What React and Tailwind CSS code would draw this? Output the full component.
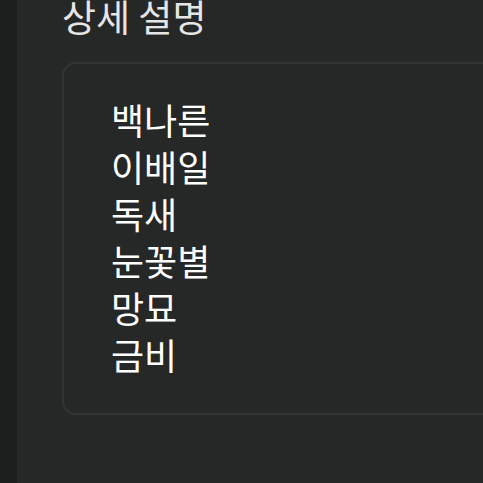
export default function App() {
  const names = ["백나른", "이배일", "독새", "눈꽃별", "망묘", "금비"];

  return (
    <div
      className="flex h-[483px] w-[483px] overflow-hidden bg-[#262727]"
      style={{ fontFamily: '"Noto Sans CJK KR", "Noto Sans", sans-serif' }}
    >
      <div className="w-[17px] shrink-0 bg-[#1d1e1e]" />
      <div className="flex-1 pl-[45px] -mt-[8px]">
        <h2 className="text-[37px] leading-[48px] font-normal text-[#e6e6e6]">상세 설명</h2>
        <div className="mt-[22px] w-[460px] rounded-[14px] border-2 border-[#333434] pl-[47px] pt-[32px] pb-[35px]">
          {names.map((n) => (
            <p key={n} className="text-[36px] leading-[47px] text-white">
              {n}
            </p>
          ))}
        </div>
      </div>
    </div>
  );
}
